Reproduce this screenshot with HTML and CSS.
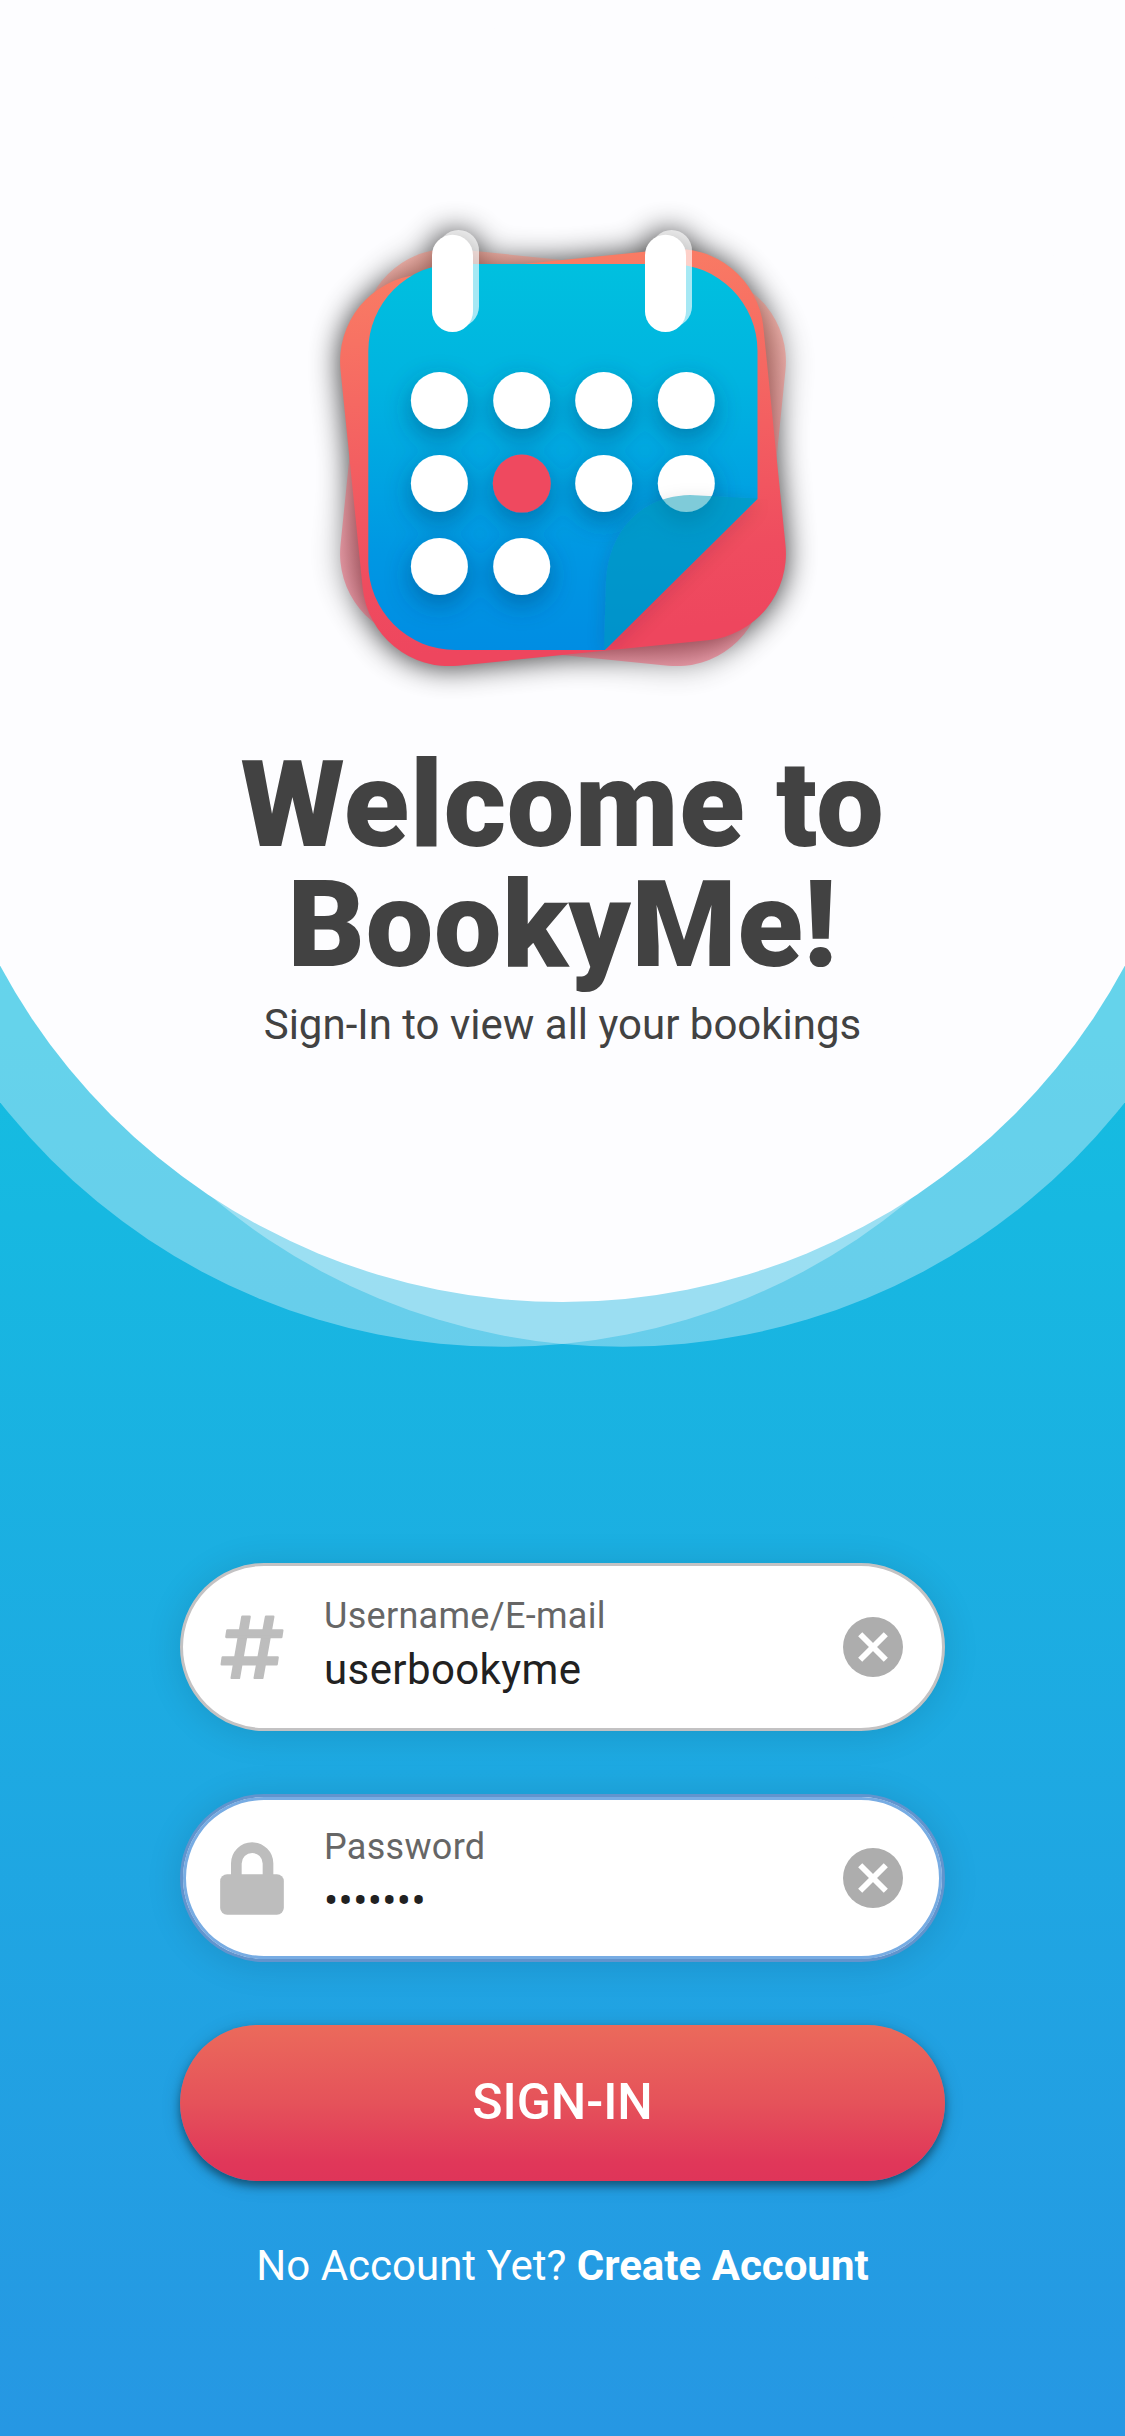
FILE: index.html
```html
<!DOCTYPE html>
<html lang="en">
<head>
<meta charset="utf-8">
<title>BookyMe</title>
<link rel="stylesheet" href="styles.css">
</head>
<body>
<main class="screen">
  <svg class="backdrop" viewBox="0 0 1125 1400" aria-hidden="true">
    <circle class="wave" cx="502.5" cy="708.3" r="638.5"/>
    <circle class="wave" cx="622.5" cy="708.3" r="638.5"/>
    <path class="paper" d="M0 0H1125V663H0Z"/>
    <circle class="paper" cx="562.5" cy="663.5" r="638.5"/>
  </svg>

  <header class="hero">
    <svg class="logo" viewBox="280 170 565 560" role="img" aria-label="BookyMe calendar">
      <defs>
        <linearGradient id="red" gradientUnits="userSpaceOnUse" x1="0" y1="262" x2="0" y2="640"><stop offset="0" stop-color="#f97b64"/><stop offset=".8" stop-color="#ef4c5f"/><stop offset="1" stop-color="#ee465e"/></linearGradient>
        <linearGradient id="blue" gradientUnits="userSpaceOnUse" x1="0" y1="264" x2="0" y2="650"><stop offset="0" stop-color="#00c0df"/><stop offset=".3" stop-color="#00b4e0"/><stop offset=".75" stop-color="#0097e3"/><stop offset="1" stop-color="#008de3"/></linearGradient>
        <filter id="softBlur" filterUnits="userSpaceOnUse" x="280" y="170" width="565" height="560"><feGaussianBlur stdDeviation="15"/></filter>
        <filter id="dotShadow" filterUnits="userSpaceOnUse" x="360" y="330" width="420" height="330"><feDropShadow dx="0" dy="9" stdDeviation="13" flood-color="#003a68" flood-opacity=".45"/></filter>
        <filter id="flapShadow" filterUnits="userSpaceOnUse" x="540" y="430" width="270" height="260"><feDropShadow dx="0" dy="5" stdDeviation="9" flood-color="#3a2030" flood-opacity=".3"/></filter>
        <clipPath id="sheets"><path d="M368.300 264H757.500V499L786 499V560L740 640L605 650H368.300Z"/></clipPath>
      </defs>
      <g filter="url(#softBlur)" opacity=".8">
        <rect x="350.500" y="262" width="425" height="393" rx="87" transform="rotate(-5.8 563 458.400)"/>
        <rect x="350.500" y="262" width="425" height="393" rx="87" opacity=".4" transform="rotate(5.800 563 458.400)"/>
        <rect x="432" y="232" width="47" height="97" rx="22"/>
        <rect x="645" y="232" width="47" height="97" rx="22"/>
      </g>
      <rect x="350.500" y="261" width="425" height="393" rx="87" fill="url(#red)" opacity=".45" transform="rotate(5.800 563 457.400)"/>
      <rect x="350.500" y="261" width="425" height="393" rx="87" fill="url(#red)" transform="rotate(-5.800 563 457.400)"/>
      <path fill="url(#blue)" d="M455.300 264H670.500a87 87 0 0 1 87 87V499L605 650H455.300a87 87 0 0 1-87-87V351a87 87 0 0 1 87-87Z"/>
      <g filter="url(#dotShadow)" fill="#fff">
        <circle cx="439.400" cy="400.500" r="28.500"/><circle cx="521.700" cy="400.500" r="28.500"/><circle cx="603.700" cy="400.500" r="28.500"/><circle cx="686.300" cy="400.500" r="28.500"/>
        <circle cx="439.400" cy="483.400" r="28.500"/><circle cx="521.800" cy="483.600" r="29" fill="#ef495f"/><circle cx="603.700" cy="483.400" r="28.500"/><circle cx="686.300" cy="483.400" r="28.500"/>
        <circle cx="439.400" cy="566.400" r="28.500"/><circle cx="521.700" cy="566.400" r="28.500"/>
      </g>
      <g clip-path="url(#sheets)"><path filter="url(#flapShadow)" fill="#0098b4" opacity=".5" d="M604 649.500L606 580C609 532 640 496 690 495L757.500 498.500L605 649.500Z"/></g>
      <g fill="#fff">
        <rect x="438" y="230" width="41" height="97" rx="20.500" opacity=".65"/><rect x="651" y="230" width="41" height="97" rx="20.500" opacity=".65"/>
        <rect x="432" y="234.700" width="41" height="97.300" rx="20.500"/><rect x="645" y="234.700" width="41" height="97.300" rx="20.500"/>
      </g>
    </svg>
    <h1 class="title">Welcome to<br>BookyMe!</h1>
    <p class="subtitle">Sign-In to view all your bookings</p>
  </header>

  <form class="form">
    <div class="field">
      <svg class="field-icon" viewBox="150 224 192 192" width="64" height="64" aria-hidden="true">
        <g class="hash"><path d="M217 229H239L207 413H185Z"/><path d="M288 229H310L277 413H254Z"/><path d="M172 270H337L334 290H169Z"/><path d="M158 351H323L320 372H155Z"/></g>
      </svg>
      <div class="field-text"><span class="label">Username/E-mail</span><span class="value">userbookyme</span></div>
      <svg class="clear" viewBox="0 0 60 60" aria-hidden="true"><circle cx="30" cy="30" r="30"/><path d="M17.200 17.200L42.800 42.800M42.800 17.200L17.200 42.800"/></svg>
    </div>
    <div class="field focused">
      <svg class="field-icon" viewBox="150 904 192 218" width="64" height="73" aria-hidden="true">
        <rect class="lock-body" x="150.500" y="1000" width="191" height="122" rx="21"/><path class="lock-bar" d="M199 1004V968a47.500 47.500 0 0 1 95 0V1004"/>
      </svg>
      <div class="field-text"><span class="label">Password</span><span class="value">•••••••</span></div>
      <svg class="clear" viewBox="0 0 60 60" aria-hidden="true"><circle cx="30" cy="30" r="30"/><path d="M17.200 17.200L42.800 42.800M42.800 17.200L17.200 42.800"/></svg>
    </div>
    <button class="submit" type="button">SIGN-IN</button>
    <p class="signup">No Account Yet? <strong>Create Account</strong></p>
  </form>
</main>
</body>
</html>
```

FILE: styles.css
```css
* { box-sizing: border-box; }

body {
  margin: 0;
  font-family: Roboto, "Liberation Sans", sans-serif;
}

.screen {
  position: relative;
  width: 1125px;
  height: 2436px;
  overflow: hidden;
  display: flex;
  flex-direction: column;
  align-items: center;
  background: linear-gradient(#08d9df, #2697e3);
}

.backdrop {
  position: absolute;
  top: 0;
  left: 0;
  width: 1125px;
  height: 1400px;
}

.wave { fill: #fdfdff; opacity: .35; }
.paper { fill: #fdfdff; }

.hero {
  position: relative;
  height: 1563px;
  padding-top: 170px;
  display: flex;
  flex-direction: column;
  align-items: center;
  color: #424242;
}

.logo { width: 565px; height: 560px; }

.title {
  margin: 15px 0 0;
  font-size: 120px;
  line-height: 120px;
  font-weight: 900;
  letter-spacing: .75px;
  text-align: center;
}

.subtitle {
  margin: 15px 0 0;
  font-size: 42px;
  line-height: 50px;
}

.form {
  position: relative;
  width: 765px;
  display: flex;
  flex-direction: column;
}

.field {
  display: flex;
  align-items: center;
  height: 168px;
  margin-bottom: 63px;
  padding: 0 39px 0 37px;
  border: 3px solid #c3c2c3;
  border-radius: 84px;
  background: #fff;
  box-shadow: 0 3px 36px rgba(0, 0, 0, .12);
}

.focused {
  border-color: #6294cd;
  box-shadow: inset 0 0 0 3px #77ace3, 0 3px 36px rgba(0, 0, 0, .12);
}

.field-icon { flex: none; }
.hash { fill: #bdbdbd; stroke: #bdbdbd; stroke-width: 7; stroke-linejoin: round; }
.lock-body { fill: #bdbdbd; }
.lock-bar { fill: none; stroke: #bdbdbd; stroke-width: 32; }

.field-text {
  flex: 1;
  display: flex;
  flex-direction: column;
  gap: 1px;
  margin-left: 40px;
  padding-top: 1px;
}

.label {
  font-size: 36px;
  line-height: 44px;
  letter-spacing: .3px;
  color: #666;
}

.value {
  font-size: 42px;
  line-height: 62px;
  letter-spacing: .4px;
  color: #212121;
}

.clear { width: 60px; height: 60px; fill: #adadad; }
.clear path { fill: none; stroke: #fff; stroke-width: 5.8; }

.submit {
  height: 156px;
  padding: 0 0 2px;
  border: 0;
  border-radius: 78px;
  background: linear-gradient(#eb6a5b, #e5525a 50%, #e03759 88%, #df3559);
  box-shadow: 0 5px 9px rgba(0, 0, 0, .4), 0 3px 20px rgba(0, 0, 0, .15);
  font: 500 50px/154px Roboto, "Liberation Sans", sans-serif;
  color: #fff;
}

.signup {
  margin: 60px 0 0;
  font-size: 42px;
  line-height: 50px;
  text-align: center;
  color: #fff;
}
```
